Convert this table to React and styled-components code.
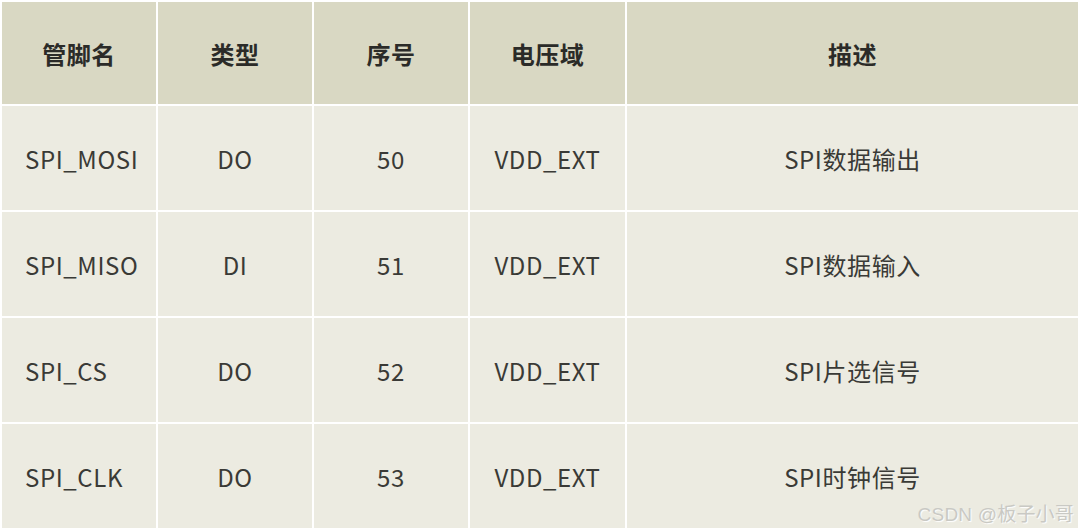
import styled, { createGlobalStyle } from 'styled-components'

const GlobalStyle = createGlobalStyle`
  html, body {
    margin: 0;
    padding: 0;
    background: #ffffff;
    overflow: hidden;
  }
  body {
    font-family: "Noto Sans CJK SC", "Noto Sans", sans-serif;
  }
`

const rows = [
  { pin: 'SPI_MOSI', type: 'DO', num: '50', domain: 'VDD_EXT', desc: 'SPI数据输出' },
  { pin: 'SPI_MISO', type: 'DI', num: '51', domain: 'VDD_EXT', desc: 'SPI数据输入' },
  { pin: 'SPI_CS', type: 'DO', num: '52', domain: 'VDD_EXT', desc: 'SPI片选信号' },
  { pin: 'SPI_CLK', type: 'DO', num: '53', domain: 'VDD_EXT', desc: 'SPI时钟信号' },
]

const App = () => {
  return (
    <Page>
      <GlobalStyle />
      <Table>
        <colgroup>
          <col style={{ width: 154 }} />
          <col style={{ width: 154 }} />
          <col style={{ width: 154 }} />
          <col style={{ width: 155 }} />
          <col />
        </colgroup>
        <thead>
          <tr>
            <HeadCell>管脚名</HeadCell>
            <HeadCell>类型</HeadCell>
            <HeadCell>序号</HeadCell>
            <HeadCell>电压域</HeadCell>
            <HeadCell>描述</HeadCell>
          </tr>
        </thead>
        <tbody>
          {rows.map((r) => (
            <tr key={r.pin}>
              <Cell $left>{r.pin}</Cell>
              <Cell>{r.type}</Cell>
              <Cell>{r.num}</Cell>
              <Cell>{r.domain}</Cell>
              <Cell>{r.desc}</Cell>
            </tr>
          ))}
        </tbody>
      </Table>
      <Watermark>CSDN @板子小哥</Watermark>
    </Page>
  )
}

const Page = styled.div`
  position: relative;
  width: 1080px;
  height: 530px;
  overflow: hidden;
  background: #ffffff;
`

const Table = styled.table`
  width: 1080px;
  border-collapse: separate;
  border-spacing: 2px;
  table-layout: fixed;
  background: #ffffff;
  color: #333330;
`

const HeadCell = styled.th`
  height: 102px;
  padding: 0;
  background: #d9d8c3;
  font-size: 24px;
  font-weight: 700;
  letter-spacing: 0.5px;
  text-align: center;
  vertical-align: middle;
  color: #2b2b28;
`

const Cell = styled.td`
  height: 104px;
  padding: 0 0 0 ${(p) => (p.$left ? '23px' : '0')};
  background: #ecebe1;
  font-size: 24px;
  font-weight: 400;
  letter-spacing: 0.6px;
  text-align: ${(p) => (p.$left ? 'left' : 'center')};
  vertical-align: middle;
  color: #3a3a36;
`

const Watermark = styled.div`
  position: absolute;
  right: 6px;
  bottom: 4px;
  font-family: "Liberation Sans", "Noto Sans CJK SC", sans-serif;
  font-size: 19px;
  color: #c9c9c4;
  text-shadow: 1px 1px 1px #ffffff;
  letter-spacing: 0.2px;
`

export default App
